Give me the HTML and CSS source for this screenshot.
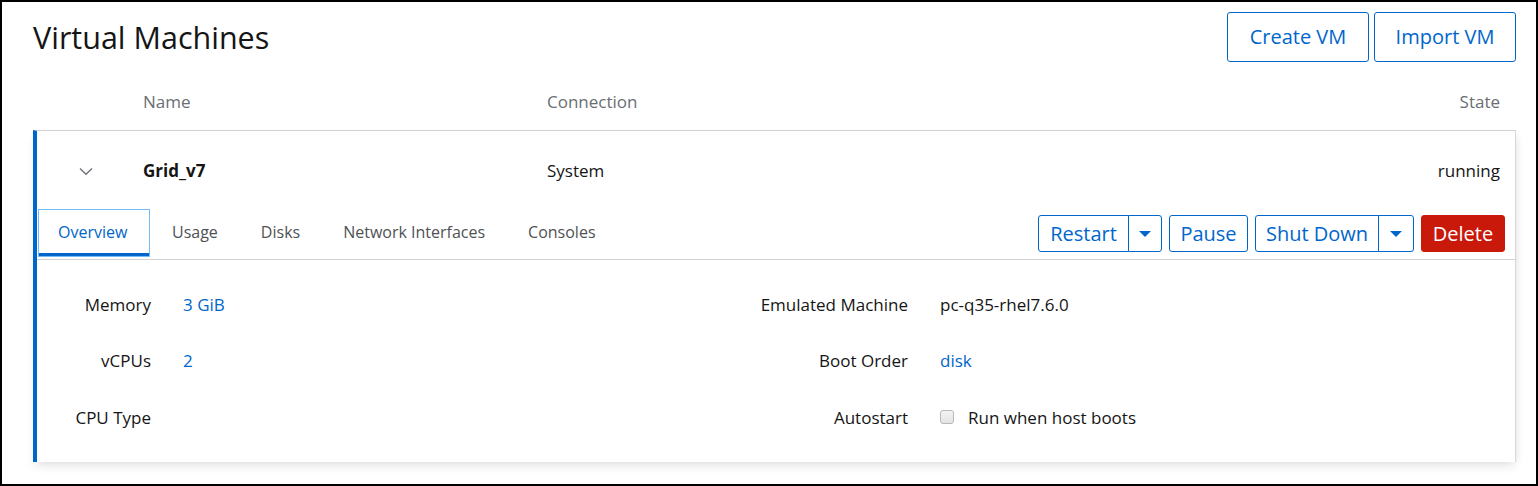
FILE: index.html
```html
<!DOCTYPE html>
<html lang="en">
<head>
<meta charset="utf-8">
<title>Virtual Machines</title>
<link rel="stylesheet" href="styles.css">
</head>
<body>
<div class="page">
  <header class="page-header">
    <h1 class="title">Virtual Machines</h1>
    <div class="header-actions">
      <button class="btn btn-secondary btn-lg">Create VM</button>
      <button class="btn btn-secondary btn-lg">Import VM</button>
    </div>
  </header>

  <div class="table-head">
    <span class="col-toggle"></span>
    <span class="col-name">Name</span>
    <span class="col-conn">Connection</span>
    <span class="col-state">State</span>
  </div>

  <section class="vm-card">
    <div class="vm-row">
      <span class="col-toggle">
        <svg class="chevron" width="14" height="9" viewBox="0 0 14 9"><path d="M1 1.5 L7 7.2 L13 1.5" fill="none" stroke="#72767b" stroke-width="1.5"/></svg>
      </span>
      <span class="col-name vm-name">Grid_v7</span>
      <span class="col-conn">System</span>
      <span class="col-state">running</span>
    </div>

    <div class="tab-bar">
      <nav class="tabs">
        <span class="tab active">Overview</span>
        <span class="tab">Usage</span>
        <span class="tab">Disks</span>
        <span class="tab">Network Interfaces</span>
        <span class="tab">Consoles</span>
      </nav>
      <div class="vm-actions">
        <div class="split">
          <button class="btn btn-secondary split-main restart">Restart</button>
          <button class="btn btn-secondary split-caret"><span class="caret"></span></button>
        </div>
        <button class="btn btn-secondary pause">Pause</button>
        <div class="split">
          <button class="btn btn-secondary split-main shutdown">Shut Down</button>
          <button class="btn btn-secondary split-caret caret-wide"><span class="caret"></span></button>
        </div>
        <button class="btn btn-danger">Delete</button>
      </div>
    </div>

    <div class="details">
      <span class="label">Memory</span>
      <a class="value link">3 GiB</a>
      <span class="label">Emulated Machine</span>
      <span class="value">pc-q35-rhel7.6.0</span>

      <span class="label">vCPUs</span>
      <a class="value link">2</a>
      <span class="label">Boot Order</span>
      <a class="value link">disk</a>

      <span class="label">CPU Type</span>
      <span class="value"></span>
      <span class="label">Autostart</span>
      <label class="value check"><span class="checkbox"></span>Run when host boots</label>
    </div>
  </section>
</div>
</body>
</html>
```

FILE: styles.css
```css
* { box-sizing: border-box; }

html, body {
  margin: 0;
  padding: 0;
  height: 100%;
}

body {
  border: 2px solid #000;
  background: #fff;
  font-family: "Open Sans", "Liberation Sans", sans-serif;
  color: #151515;
  font-size: 17px;
}

.page {
  padding: 10px 20px 0 31px;
}

.page-header {
  display: flex;
  align-items: center;
  justify-content: space-between;
}

.title {
  margin: 0;
  font-size: 30.5px;
  font-weight: 400;
  line-height: 50px;
}

.header-actions {
  display: flex;
  gap: 5px;
}

.btn {
  font-family: inherit;
  font-size: 20px;
  line-height: 1;
  border-radius: 3px;
  cursor: pointer;
  padding: 0;
  height: 37px;
  background: #fff;
}

.btn-secondary {
  color: #0066cc;
  border: 1px solid #0066cc;
}

.btn-lg {
  height: 50px;
  width: 142px;
}

.btn-danger {
  background: #c9190b;
  border: 1px solid #c9190b;
  color: #fff;
  width: 84px;
}

.table-head,
.vm-row {
  display: flex;
  align-items: center;
}

.table-head {
  margin-top: 12px;
  height: 56px;
  padding-bottom: 2px;
  color: #6a6e73;
  padding-right: 16px;
}

.col-toggle { width: 110px; flex: none; }
.col-name { width: 404px; flex: none; }
.col-conn { flex: 1; }
.col-state { text-align: right; }

.vm-card {
  border-top: 1px solid #d2d2d2;
  border-right: 1px solid #d8d8d8;
  border-left: 4px solid #0066cc;
  box-shadow: 0 6px 10px -2px rgba(0, 0, 0, 0.10), 4px 2px 8px -4px rgba(0,0,0,0.08);
  background: #fff;
  height: 332px;
}

.vm-row {
  height: 78px;
  padding-right: 15px;
}

.vm-row .col-toggle { width: 106px; padding-left: 42px; }
.chevron { display: block; margin-top: 2px; }

.vm-name { font-weight: 700; }

.tab-bar {
  display: flex;
  align-items: center;
  justify-content: space-between;
  height: 51px;
  border-bottom: 1px solid #d2d2d2;
  padding-right: 10px;
}

.tabs {
  display: flex;
  height: 50px;
  padding-left: 1px;
}

.tab {
  display: flex;
  align-items: center;
  padding: 0 20px 3px 21px;
  font-size: 16px;
  color: #4f5255;
  height: 48px;
  border: 1px solid transparent;
}

.tab.active {
  color: #0066cc;
  border-color: #73bcf7;
  box-shadow: inset 0 -3px 0 #0066cc;
  padding: 0 20px 3px 19px;
  width: 112px;
}

.vm-actions {
  display: flex;
  gap: 7px;
  margin-top: -1px;
}

.split { display: flex; }

.split-main {
  border-radius: 3px 0 0 3px;
}

.restart { width: 91px; }
.pause { width: 79px; }
.shutdown { width: 124px; }

.split-caret {
  border-radius: 0 3px 3px 0;
  width: 34px;
  margin-left: -1px;
  display: flex;
  align-items: center;
  justify-content: center;
}

.caret-wide { width: 36px; }

.caret {
  width: 0;
  height: 0;
  border-left: 6px solid transparent;
  border-right: 6px solid transparent;
  border-top: 6px solid #0066cc;
}

.details {
  display: grid;
  grid-template-columns: 114px 525px 168px 1fr;
  column-gap: 32px;
  grid-auto-rows: 56.5px;
  align-items: center;
  padding-top: 16px;
}

.label {
  text-align: right;
  white-space: nowrap;
}

.value { color: #151515; }
.link { color: #0066cc; text-decoration: none; }

.check {
  display: flex;
  align-items: center;
  gap: 14px;
}

.checkbox {
  width: 14px;
  height: 14px;
  border: 1px solid #b8b8b8;
  border-radius: 3px;
  background: linear-gradient(#f3f3f3, #e4e4e4);
}
```
